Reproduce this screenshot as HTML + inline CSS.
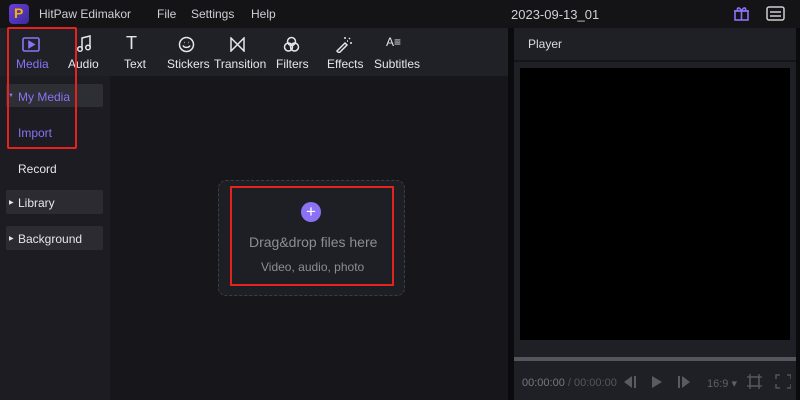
<!DOCTYPE html>
<html><head><style>
*{margin:0;padding:0;box-sizing:border-box}
body{width:800px;height:400px;background:#0b0b0e;position:relative;overflow:hidden;font-family:"Liberation Sans",sans-serif;color:#e6e6ea;font-size:12px}
.a{position:absolute}
.t{white-space:nowrap}
</style></head><body>
<div class="a" style="left:0;top:0;width:800px;height:28px;background:#141417"></div>
<div class="a" style="left:9px;top:4px;width:20px;height:20px;border-radius:4px;background:linear-gradient(135deg,#6a3fd8,#3b2a9a)"></div>
<div class="a t" style="left:14px;top:5px;color:#f5b400;font-weight:bold;font-size:14px">P</div>
<div class="a t" style="left:39px;top:7px;font-size:12px;color:#cfcfd4">HitPaw Edimakor</div>
<div class="a t" style="left:157px;top:7px;color:#cfcfd4">File</div>
<div class="a t" style="left:191px;top:7px;color:#cfcfd4">Settings</div>
<div class="a t" style="left:251px;top:7px;color:#cfcfd4">Help</div>
<div class="a t" style="left:511px;top:7px;font-size:13px;color:#d0d0d5">2023-09-13_01</div>
<svg class="a" style="left:733px;top:5px" width="17" height="17" viewBox="0 0 17 17" fill="none" stroke="#8b72f5" stroke-width="1.6"><rect x="2" y="6" width="13" height="9"/><path d="M1 6h15M8.5 6v9M8.5 6C6 1 3 3 5 6M8.5 6C11 1 14 3 12 6"/></svg>
<svg class="a" style="left:766px;top:6px" width="19" height="15" viewBox="0 0 19 15" fill="none" stroke="#cfcfd4" stroke-width="1.5"><rect x="1" y="1" width="17" height="13" rx="2"/><path d="M4 6h11M4 10h11"/></svg>

<div class="a" style="left:0;top:28px;width:508px;height:48px;background:#202027"></div>
<div class="a" style="left:0;top:76px;width:110px;height:324px;background:#1c1c22"></div>
<div class="a" style="left:110px;top:76px;width:398px;height:324px;background:#16161b"></div>
<div class="a" style="left:514px;top:28px;width:282px;height:372px;background:#1f1f26"></div>
<div class="a" style="left:514px;top:60px;width:282px;height:2px;background:#141418"></div>
<div class="a t" style="left:528px;top:37px;color:#dcdce0">Player</div>
<div class="a" style="left:520px;top:68px;width:270px;height:272px;background:#000"></div>
<div class="a" style="left:514px;top:357px;width:282px;height:4px;background:#55555e"></div>
<div class="a t" style="left:522px;top:377px;color:#77777f;font-size:11px">00:00:00 <span style="color:#55555c">/ 00:00:00</span></div>
<svg class="a" style="left:622px;top:375px" width="70" height="14" viewBox="0 0 70 14" fill="#5a5a62"><path d="M10 1L2 7l8 6zM12 1h2v12h-2z"/><path d="M30 1l10 6-10 6z"/><path d="M56 1h2v12h-2zM60 1l8 6-8 6z"/></svg>
<div class="a t" style="left:707px;top:377px;color:#5f5f67;font-size:11px">16:9 ▾</div>
<svg class="a" style="left:747px;top:374px" width="44" height="15" viewBox="0 0 44 15" fill="none" stroke="#5a5a62" stroke-width="1.3"><rect x="3" y="3" width="9" height="9"/><path d="M0 3h15M0 12h15M3 0v15M12 0v15"/><path d="M29 5V1h4M40 1h4v4M44 10v4h-4M33 14h-4v-4"/></svg>

<!-- toolbar -->
<svg class="a" style="left:22px;top:37px" width="18" height="15" viewBox="0 0 18 15" fill="none" stroke="#8b72f5" stroke-width="1.6"><rect x="1" y="1" width="16" height="13" rx="1.5"/><path d="M7 4.5v6l5-3z" fill="#8b72f5"/></svg>
<div class="a t" style="left:16px;top:57px;color:#8b72f5">Media</div>
<svg class="a" style="left:76px;top:35px" width="16" height="18" viewBox="0 0 16 18" fill="none" stroke="#e6e6ea" stroke-width="1.5"><path d="M6 14V3l8-2v11"/><circle cx="4" cy="14" r="2.3"/><circle cx="12" cy="12.5" r="2.3"/></svg>
<div class="a t" style="left:68px;top:57px">Audio</div>
<div class="a t" style="left:126px;top:33px;font-size:18px;font-weight:300">T</div>
<div class="a t" style="left:124px;top:57px">Text</div>
<svg class="a" style="left:178px;top:36px" width="17" height="17" viewBox="0 0 17 17" fill="none" stroke="#e6e6ea" stroke-width="1.5"><circle cx="8.5" cy="8.5" r="7"/><path d="M5 9.5c1 2.5 6 2.5 7 0M6 6.5h.5M10.5 6.5h.5"/></svg>
<div class="a t" style="left:167px;top:57px">Stickers</div>
<svg class="a" style="left:229px;top:37px" width="17" height="15" viewBox="0 0 17 15" fill="none" stroke="#e6e6ea" stroke-width="1.5"><path d="M2 1v13l13-13v13z"/></svg>
<div class="a t" style="left:214px;top:57px">Transition</div>
<svg class="a" style="left:283px;top:36px" width="17" height="17" viewBox="0 0 17 17" fill="none" stroke="#e6e6ea" stroke-width="1.5"><circle cx="8.5" cy="5.5" r="4"/><circle cx="5.5" cy="11" r="4"/><circle cx="11.5" cy="11" r="4"/></svg>
<div class="a t" style="left:276px;top:57px">Filters</div>
<svg class="a" style="left:335px;top:35px" width="18" height="18" viewBox="0 0 18 18" fill="none" stroke="#e6e6ea" stroke-width="1.5"><path d="M2 16l8-8 2 2-8 8z"/><path d="M10 2v2M14 4l1-1M15 8h2M12 6l1 0"/></svg>
<div class="a t" style="left:327px;top:57px">Effects</div>
<div class="a t" style="left:386px;top:35px;font-size:12px">A≡</div>
<div class="a t" style="left:374px;top:57px">Subtitles</div>

<!-- sidebar -->
<div class="a" style="left:6px;top:84px;width:97px;height:23px;background:#2e2e35;border-radius:2px"></div>
<div class="a t" style="left:8px;top:93px;color:#8b72f5;font-size:6px">▼</div>
<div class="a t" style="left:18px;top:90px;color:#8b72f5">My Media</div>
<div class="a t" style="left:18px;top:126px;color:#8b72f5">Import</div>
<div class="a t" style="left:18px;top:162px">Record</div>
<div class="a" style="left:6px;top:190px;width:97px;height:24px;background:#2b2b31;border-radius:2px"></div>
<div class="a t" style="left:9px;top:199px;font-size:6px">▶</div>
<div class="a t" style="left:18px;top:196px">Library</div>
<div class="a" style="left:6px;top:226px;width:97px;height:24px;background:#2b2b31;border-radius:2px"></div>
<div class="a t" style="left:9px;top:235px;font-size:6px">▶</div>
<div class="a t" style="left:18px;top:232px">Background</div>

<!-- drop zone -->
<div class="a" style="left:218px;top:180px;width:187px;height:116px;border:1px dashed #3c3c46;border-radius:8px;background:#1e1e25"></div>
<div class="a" style="left:301px;top:202px;width:20px;height:20px;border-radius:50%;background:#8b72f5;color:#fff;text-align:center;line-height:19px;font-size:17px">+</div>
<div class="a t" style="left:249px;top:234px;font-size:14px;color:#8d8d95">Drag&amp;drop files here</div>
<div class="a t" style="left:261px;top:260px;font-size:12px;color:#8d8d95">Video, audio, photo</div>

<div class="a" style="left:7px;top:27px;width:70px;height:122px;border:2px solid #e5231e;border-radius:2px"></div>
<div class="a" style="left:230px;top:186px;width:164px;height:100px;border:2px solid #e5231e"></div>
</body></html>
